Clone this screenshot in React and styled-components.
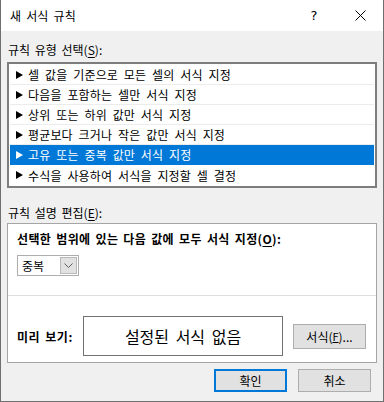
import React from "react";
import styled, { createGlobalStyle } from "styled-components";

const GlobalStyle = createGlobalStyle`
    html, body {
        margin: 0;
        padding: 0;
        background: #f0f0f0;
    }
    body {
        font-family: "Noto Sans CJK KR", "Noto Sans", sans-serif;
        font-size: 12px;
        color: #000;
    }
`;

const Window = styled.div`
    width: 384px;
    height: 402px;
    box-sizing: border-box;
    border-left: 1px solid #6f6f6f;
    border-right: 1px solid #6f6f6f;
    border-bottom: 1px solid #6f6f6f;
    background: #f0f0f0;
    display: flex;
    flex-direction: column;
`;

const TitleBar = styled.div`
    height: 31px;
    flex: none;
    background: #fff;
    display: flex;
    align-items: center;
    padding-left: 9px;
`;

const Title = styled.div`
    flex: 1;
    font-size: 12px;
    word-spacing: 2px;
    letter-spacing: 0.2px;
`;

const TitleButton = styled.div`
    width: 46px;
    height: 31px;
    display: flex;
    align-items: center;
    justify-content: center;
    font-family: "DejaVu Sans", sans-serif;
    font-size: 13px;
`;

const Body = styled.div`
    padding: 0 6px;
    display: flex;
    flex-direction: column;
`;

const Label = styled.div`
    line-height: 18px;
    padding-left: 1px;
    margin-top: ${(p) => p.$top}px;
    word-spacing: 2px;
`;

const Key = styled.span`
    text-decoration: underline;
    text-underline-offset: 2px;
`;

const ListBox = styled.div`
    margin-top: 3px;
    border: 2px solid #7d7d7d;
    background: #fff;
    padding: 1px;
    display: flex;
    flex-direction: column;
`;

const Row = styled.div`
    height: 20px;
    box-sizing: border-box;
    display: flex;
    align-items: center;
    gap: 5px;
    padding-left: 6px;
    border-bottom: 1px solid ${(p) => (p.$selected ? "#0078d7" : "#ececec")};
    background: ${(p) => (p.$selected ? "#0078d7" : "#fff")};
    color: ${(p) => (p.$selected ? "#fff" : "#000")};
    word-spacing: 3px;
    letter-spacing: 0.15px;
    &:last-child {
        border-bottom: none;
    }
`;

const Panel = styled.div`
    margin-top: 1px;
    border: 1px solid #a5a5a5;
    background: #fff;
    display: flex;
    flex-direction: column;
    height: 140px;
    box-sizing: border-box;
`;

const PanelTop = styled.div`
    padding: 6px 9px 0;
    display: flex;
    flex-direction: column;
    align-items: flex-start;
`;

const Heading = styled.div`
    font-weight: bold;
    line-height: 18px;
    word-spacing: 2px;
    letter-spacing: 0.35px;
`;

const Select = styled.div`
    margin-top: 7px;
    width: 62px;
    height: 21px;
    box-sizing: border-box;
    border: 1px solid #adadad;
    display: flex;
    align-items: stretch;
    justify-content: space-between;
    padding: 1px;
`;

const SelectText = styled.span`
    padding-left: 3px;
    line-height: 17px;
`;

const SelectArrow = styled.div`
    width: 17px;
    box-sizing: border-box;
    background: #e1e1e1;
    border: 1px solid #b9b9b9;
    display: flex;
    align-items: center;
    justify-content: center;
`;

const Divider = styled.div`
    margin-top: 19px;
    height: 1px;
    background: #dedede;
`;

const PreviewRow = styled.div`
    margin-top: 20px;
    padding-left: 9px;
    display: flex;
    align-items: center;
`;

const PreviewLabel = styled.div`
    font-weight: bold;
    width: 66px;
    word-spacing: 2px;
    letter-spacing: 0.5px;
`;

const PreviewBox = styled.div`
    width: 200px;
    height: 40px;
    box-sizing: border-box;
    border: 1px solid #707070;
    display: flex;
    align-items: center;
    justify-content: center;
    font-size: 16px;
    word-spacing: 3px;
`;

const Button = styled.div`
    width: ${(p) => p.$w || 73}px;
    height: ${(p) => p.$h || 23}px;
    margin-left: ${(p) => p.$ml || 0}px;
    box-sizing: border-box;
    background: #e1e1e1;
    border: ${(p) => (p.$primary ? "2px solid #0078d7" : "1px solid #adadad")};
    display: flex;
    align-items: center;
    justify-content: center;
    font-size: 12px;
`;

const SmallKey = styled.span`
    font-size: 11px;
    text-decoration: underline;
    text-underline-offset: 1px;
`;

const Footer = styled.div`
    margin-top: 6px;
    padding-right: 6px;
    display: flex;
    justify-content: flex-end;
    gap: 11px;
`;

const Triangle = ({ color }) => (
    <svg width="7" height="8" viewBox="0 0 7 8">
        <polygon points="0,0 7,4 0,8" fill={color} />
    </svg>
);

const rules = [
    "셀 값을 기준으로 모든 셀의 서식 지정",
    "다음을 포함하는 셀만 서식 지정",
    "상위 또는 하위 값만 서식 지정",
    "평균보다 크거나 작은 값만 서식 지정",
    "고유 또는 중복 값만 서식 지정",
    "수식을 사용하여 서식을 지정할 셀 결정",
];

export default function App() {
    return (
        <>
            <GlobalStyle />
            <Window>
                <TitleBar>
                    <Title>새 서식 규칙</Title>
                    <TitleButton>?</TitleButton>
                    <TitleButton>
                        <svg width="11" height="11" viewBox="0 0 11 11">
                            <path d="M0.5 0.5 L10.5 10.5 M10.5 0.5 L0.5 10.5" stroke="#000" strokeWidth="1" />
                        </svg>
                    </TitleButton>
                </TitleBar>

                <Body>
                    <Label $top={10}>
                        규칙 유형 선택(<Key>S</Key>):
                    </Label>
                    <ListBox>
                        {rules.map((rule, i) => (
                            <Row key={rule} $selected={i === 4}>
                                <Triangle color={i === 4 ? "#fff" : "#000"} />
                                {rule}
                            </Row>
                        ))}
                    </ListBox>

                    <Label $top={16}>
                        규칙 설명 편집(<Key>E</Key>):
                    </Label>
                    <Panel>
                        <PanelTop>
                            <Heading>
                                선택한 범위에 있는 다음 값에 모두 서식 지정(<Key>O</Key>):
                            </Heading>
                            <Select>
                                <SelectText>중복</SelectText>
                                <SelectArrow>
                                    <svg width="9" height="5" viewBox="0 0 9 5">
                                        <path d="M0.5 0.5 L4.5 4.5 L8.5 0.5" stroke="#606060" fill="none" strokeWidth="1" />
                                    </svg>
                                </SelectArrow>
                            </Select>
                        </PanelTop>
                        <Divider />
                        <PreviewRow>
                            <PreviewLabel>미리 보기:</PreviewLabel>
                            <PreviewBox>설정된 서식 없음</PreviewBox>
                            <Button $w={73} $h={25} $ml={10}>
                                서식(<SmallKey>F</SmallKey>)...
                            </Button>
                        </PreviewRow>
                    </Panel>

                    <Footer>
                        <Button $primary>확인</Button>
                        <Button>취소</Button>
                    </Footer>
                </Body>
            </Window>
        </>
    );
}
